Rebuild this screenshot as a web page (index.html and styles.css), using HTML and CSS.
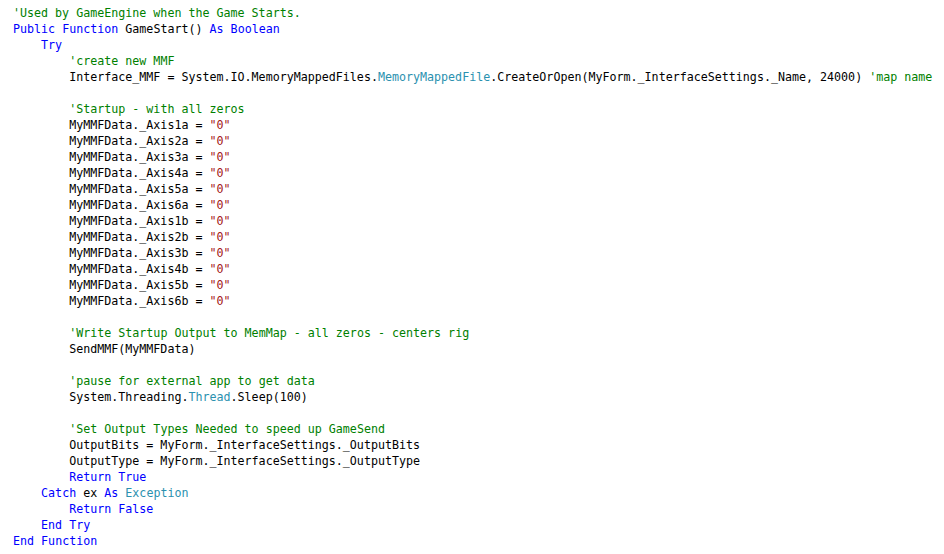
FILE: index.html
```html
<!DOCTYPE html>
<html>
<head>
<meta charset="utf-8">
<link rel="stylesheet" href="styles.css">
</head>
<body>
<pre class="code"><span class="c">'Used by GameEngine when the Game Starts.</span>
<span class="k">Public</span> <span class="k">Function</span> GameStart() <span class="k">As</span> <span class="k">Boolean</span>
    <span class="k">Try</span>
        <span class="c">'create new MMF</span>
        Interface_MMF = System.IO.MemoryMappedFiles.<span class="t">MemoryMappedFile</span>.CreateOrOpen(MyForm._InterfaceSettings._Name, 24000) <span class="c">'map name</span>

        <span class="c">'Startup - with all zeros</span>
        MyMMFData._Axis1a = <span class="s">"0"</span>
        MyMMFData._Axis2a = <span class="s">"0"</span>
        MyMMFData._Axis3a = <span class="s">"0"</span>
        MyMMFData._Axis4a = <span class="s">"0"</span>
        MyMMFData._Axis5a = <span class="s">"0"</span>
        MyMMFData._Axis6a = <span class="s">"0"</span>
        MyMMFData._Axis1b = <span class="s">"0"</span>
        MyMMFData._Axis2b = <span class="s">"0"</span>
        MyMMFData._Axis3b = <span class="s">"0"</span>
        MyMMFData._Axis4b = <span class="s">"0"</span>
        MyMMFData._Axis5b = <span class="s">"0"</span>
        MyMMFData._Axis6b = <span class="s">"0"</span>

        <span class="c">'Write Startup Output to MemMap - all zeros - centers rig</span>
        SendMMF(MyMMFData)

        <span class="c">'pause for external app to get data</span>
        System.Threading.<span class="t">Thread</span>.Sleep(100)

        <span class="c">'Set Output Types Needed to speed up GameSend</span>
        OutputBits = MyForm._InterfaceSettings._OutputBits
        OutputType = MyForm._InterfaceSettings._OutputType
        <span class="k">Return</span> <span class="k">True</span>
    <span class="k">Catch</span> ex <span class="k">As</span> <span class="t">Exception</span>
        <span class="k">Return</span> <span class="k">False</span>
    <span class="k">End</span> <span class="k">Try</span>
<span class="k">End</span> <span class="k">Function</span></pre>
</body>
</html>
```
FILE: styles.css
```css
html, body {
  margin: 0;
  padding: 0;
  background: #ffffff;
}
.code {
  margin: 0;
  padding: 5px 0 0 13px;
  font-family: "DejaVu Sans Mono", "Liberation Mono", monospace;
  font-size: 11.667px;
  line-height: 16px;
  color: #000000;
  white-space: pre;
  overflow: hidden;
}
.k { color: #0000ff; }
.c { color: #008000; }
.s { color: #a31515; }
.t { color: #2b91af; }
```
